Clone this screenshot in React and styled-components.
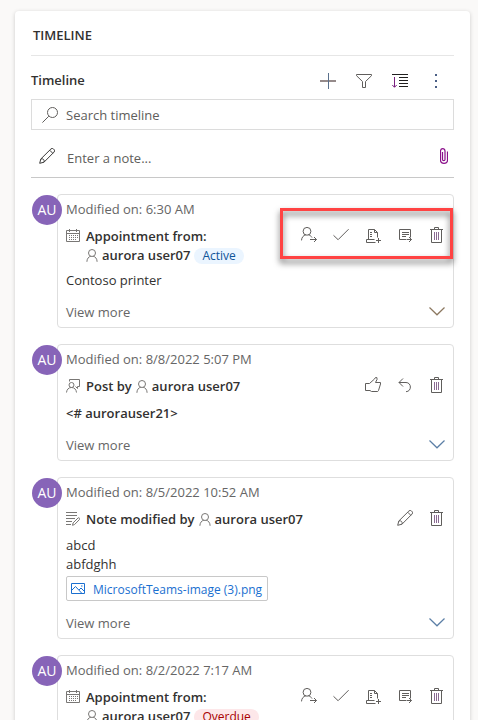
import React from "react";
import styled, { createGlobalStyle, css } from "styled-components";

const GlobalStyle = createGlobalStyle`
  *, *::before, *::after { box-sizing: border-box; }
  body {
    margin: 0;
    background: #faf9f8;
    color: #323130;
    font-family: "Open Sans", "Noto Sans", sans-serif;
    font-size: 13px;
    line-height: 19px;
  }
  button, input { font: inherit; color: inherit; }
  h2, h3, p, ul { margin: 0; padding: 0; font-size: inherit; }
`;

/* ---------- icons ---------- */

const Glyph = styled.svg`
  display: block;
  flex: none;
  fill: none;
  stroke: currentColor;
  stroke-width: 1;
`;

const Icon = ({ w = 16, h = 16, children }) => (
  <Glyph width={w} height={h} viewBox={`0 0 ${w} ${h}`} aria-hidden="true">
    {children}
  </Glyph>
);

const PlusIcon = () => (
  <Icon>
    <path d="M0 8H16" stroke="#958a8a" strokeWidth="2" />
    <path d="M8.5 0V16" stroke="#5a708c" />
  </Icon>
);
const FilterIcon = () => (
  <Icon>
    <path d="M.5 1.5h15v1.2L9.5 8.5v6h-3v-6L.5 2.7z" />
  </Icon>
);
const SortIcon = () => (
  <Icon>
    <path d="M0 1.5h16M7 4.5h9M7 7.5h9M7 10.5h9M7 13.5h9" stroke="#201f1e" />
    <path d="M2.5 4v10M.3 12l2.2 2.3L4.7 12" stroke="#7a2080" />
  </Icon>
);
const MoreIcon = () => (
  <Icon>
    <path d="M7 1h2v2H7zM7 7h2v2H7zM7 13h2v2H7z" fill="#4a5f85" stroke="none" />
  </Icon>
);
const SearchIcon = () => (
  <Icon>
    <circle cx="10.5" cy="5.5" r="5" />
    <path d="M6.8 9.2.4 15.6" />
  </Icon>
);
const PencilIcon = () => (
  <Icon>
    <path d="M.7 15.3l1.1-4.3L11.9 1a1.8 1.8 0 0 1 2.6 0l.5.5a1.8 1.8 0 0 1 0 2.6L5 14.2zM10.7 2.2l3.1 3.1M1.8 11a2.4 2.4 0 0 1 3.2 3.2" />
  </Icon>
);
const ClipIcon = () => (
  <Icon w={8} h={16}>
    <path
      d="M7.5 3.5v8.8c0 4-7 4-7 0V3.2c0-3.4 4.5-3.4 4.5 0v8.3c0 1.6-2.5 1.6-2.5 0V4"
      stroke="#8a0f8a"
      strokeWidth="1.2"
    />
  </Icon>
);
const AssignIcon = () => (
  <Icon>
    <circle cx="6" cy="4.3" r="3.9" />
    <path d="M.5 13.4c.1-2.9 1.9-5.2 4.3-5.5M7.5 8c1.6.3 2.7 1.1 3.5 2.5M9 12.5h6.5M13 10l2.5 2.5L13 15" />
  </Icon>
);
const CheckIcon = () => (
  <Icon>
    <path d="M.5 8.3l4.600 4.400L15.600 2.200" />
  </Icon>
);
const QueueIcon = () => (
  <Icon>
    <path d="M3.5 12.5v-10h6l3 3v5M9.5 2.5v3h3M1.5 12.5h8M1.5 12.5v3h9M5 5.5h2M5 7.5h2M5 9.5h2M13.5 11v5M11 13.5h5" />
  </Icon>
);
const OpenRecordIcon = () => (
  <Icon>
    <path d="M9 12.5H2.5v-10h11v8M5 5.5h7M5 7.5h7M5 9.5h4M9.5 12.5h5M12 10l2.5 2.5L12 15" />
  </Icon>
);
const TrashIcon = () => (
  <Icon>
    <path d="M1 2.5h13M5.5 2.5v-2h4v2M2.5 2.5v13h10v-13" />
    <path d="M5.5 5v8M7.5 5v8M9.5 5v8" stroke="#8a6a92" />
  </Icon>
);
const LikeIcon = () => (
  <Icon>
    <path d="M.5 6.5h4L9.5 2l1-1.5h1.3l.3 1.8-1.6 3.2h5v1.5l-2 6.5-.8 1H6.5l-1.5-1H.5z" />
  </Icon>
);
const ReplyIcon = () => (
  <Icon>
    <path d="M6 1.5l-4 4 4 4M2 5.5h7c5.7 0 6 9 0 9.2" />
  </Icon>
);
const ChevronIcon = () => (
  <Icon>
    <path d="M.5 3.5l7.5 7.3 7.5-7.3" strokeWidth="1.2" />
  </Icon>
);
const PersonIcon = () => (
  <Icon w={12} h={13}>
    <circle cx="6" cy="4" r="3.5" />
    <path d="M.9 12.8c0-3 1.7-5.2 3.9-5.5M11.1 12.8c0-3-1.7-5.2-3.9-5.5" />
  </Icon>
);
const CalendarIcon = () => (
  <Icon w={14} h={14}>
    <path d="M.5 1.5h13v11H.5zM.5 4.5h13M3.5 0v3M10.5 0v3" />
    <path d="M3 6.5h9M3 8.5h9M3 10.5h7" strokeDasharray="1 1" />
  </Icon>
);
const PostIcon = () => (
  <Icon w={14} h={14}>
    <path d="M3.5 2.5v-2h10v7h-2v2l-2-2" />
    <circle cx="5.5" cy="6" r="2.5" />
    <path d="M.5 13.5c.3-3 2-5 5-5s4.7 2 5 5" />
  </Icon>
);
const NoteIcon = () => (
  <Icon w={14} h={14}>
    <path d="M0 .5h11M0 3.5h11M0 6.5h9M0 9.5h6M0 12.5h5" />
    <path d="M6.5 13.3l.6-2.400 4.900-4.900c1-.9 2.300.5 1.500 1.500l-4.900 5z" />
  </Icon>
);
const PictureIcon = () => (
  <Icon w={14} h={12}>
    <path d="M.5.5h13v10H.5zM.5 7.5l4-4 6.5 7M8 7l2-2 3.5 3.5M10 3h1.5" />
  </Icon>
);

/* ---------- layout ---------- */

const Page = styled.main`
  height: 100vh;
  overflow: hidden;
  padding: 11px 8px 0 15px;
`;

const Panel = styled.section`
  min-height: 100vh;
  padding: 0 16px 16px;
  background: #fff;
  border-radius: 4px;
  box-shadow: 0 1px 4px rgba(0, 0, 0, 0.18);
`;

const PanelTitle = styled.h2`
  padding: 15px 2px 10px;
  border-bottom: 1px solid #e6e6e6;
  font-weight: 600;
`;

const Toolbar = styled.div`
  display: flex;
  align-items: center;
  height: 36px;
  margin-top: 7px;
`;

const ToolbarTitle = styled.h3`
  flex: 1;
  padding-bottom: 2px;
  font-weight: 600;
`;

const IconButton = styled.button`
  display: flex;
  align-items: center;
  justify-content: center;
  width: ${(p) => p.$width}px;
  height: 16px;
  padding: 0;
  border: 0;
  background: none;
  color: #605e5c;
  cursor: pointer;
`;

const SearchBox = styled.label`
  display: flex;
  align-items: center;
  gap: 8px;
  height: 31px;
  padding: 0 10px;
  border: 1px solid #dcdcdc;
  color: #605e5c;
`;

const NoteBox = styled.label`
  display: flex;
  gap: 12px;
  padding: 18px 6px 9px 8px;
  border-bottom: 1px solid #c8c8c8;
  color: #3b3a39;
`;

const TextInput = styled.input`
  flex: 1;
  min-width: 0;
  height: 20px;
  padding: 0;
  border: 0;
  outline: 0;
  background: none;
  &::placeholder { color: #605e5c; opacity: 1; }
`;

const Feed = styled.ul`
  display: flex;
  flex-direction: column;
  gap: 16px;
  margin-top: 16px;
  list-style: none;
`;

const Entry = styled.li`
  display: flex;
  align-items: flex-start;
`;

const Avatar = styled.span`
  z-index: 1;
  flex: none;
  width: 30px;
  margin: 1px -5px 0 1px;
  border-radius: 50%;
  background: #8764b8;
  color: #fff;
  font-size: 14px;
  line-height: 30px;
  text-align: center;
`;

const Card = styled.article`
  flex: 1;
  min-width: 0;
  padding: 4px 0 5px 8px;
  border: 1px solid #dedede;
  border-radius: 4px;
`;

const Modified = styled.p`
  color: #666;
  line-height: 20px;
`;

const CardHeader = styled.header`
  display: flex;
  align-items: flex-start;
  gap: 6px;
  min-height: 20px;
  margin: 8px 0 6px;
  color: #605e5c;
`;

const TitleIcon = styled.span`
  padding-top: 2px;
  color: #797775;
`;

const Title = styled.h3`
  display: flex;
  flex: 1;
  flex-direction: ${(p) => (p.$stacked ? "column" : "row")};
  gap: ${(p) => (p.$stacked ? 0 : 4)}px;
  color: #323130;
  font-weight: 600;
  white-space: nowrap;
`;

const Author = styled.span`
  display: flex;
  align-items: center;
  gap: 4px;
  & > svg { color: #797775; }
`;

const tones = {
  info: css`background: #ebf5ff; color: #0f5499;`,
  danger: css`background: #fde7e9; color: #a80000;`,
};

const Badge = styled.span`
  padding: 0 8px;
  border-radius: 8px;
  font-size: 12px;
  font-weight: 400;
  line-height: 16px;
  ${(p) => tones[p.$tone]}
`;

const Actions = styled.div`
  position: relative;
  display: flex;
`;

const Highlight = styled.span`
  position: absolute;
  inset: -19px 0 -16px -13px;
  border: 3px solid #ff4343;
  filter: drop-shadow(0 4px 3px rgba(0, 0, 0, 0.6));
  pointer-events: none;
`;

const Body = styled.p`
  font-weight: ${(p) => (p.$strong ? 600 : 400)};
  line-height: ${(p) => (p.$strong ? 20 : 19)}px;
  white-space: pre-line;
`;

const Attachment = styled.a`
  display: flex;
  align-items: flex-start;
  gap: 8px;
  width: fit-content;
  height: 25px;
  margin-top: 2px;
  padding: 0 5px 0 4px;
  border: 1px solid #c8c8c8;
  border-radius: 2px;
  color: #1a6fd0;
  font-size: 12px;
  line-height: 26px;
  text-decoration: none;
  & > svg { margin-top: 6px; }
`;

const ViewMore = styled.button`
  display: flex;
  align-items: center;
  justify-content: space-between;
  width: 100%;
  height: 20px;
  margin-top: 12px;
  padding: 0 8px 0 0;
  border: 0;
  background: none;
  color: #666;
  cursor: pointer;
  & > svg { color: ${(p) => (p.$warm ? "#8c7860" : "#5c7fa6")}; }
`;

/* ---------- data ---------- */

const actionIcons = {
  Assign: AssignIcon,
  "Close activity": CheckIcon,
  "Add to queue": QueueIcon,
  "Open record": OpenRecordIcon,
  Delete: TrashIcon,
  Like: LikeIcon,
  Reply: ReplyIcon,
  Edit: PencilIcon,
};

const activityActions = ["Assign", "Close activity", "Add to queue", "Open record", "Delete"];

const entries = [
  {
    modified: "6:30 AM",
    Kind: CalendarIcon,
    title: "Appointment from:",
    stacked: true,
    badge: ["Active", "info"],
    actions: activityActions,
    highlighted: true,
    body: "Contoso printer",
  },
  {
    modified: "8/8/2022 5:07 PM",
    Kind: PostIcon,
    title: "Post by",
    actions: ["Like", "Reply", "Delete"],
    body: "<# aurorauser21>",
    strong: true,
  },
  {
    modified: "8/5/2022 10:52 AM",
    Kind: NoteIcon,
    title: "Note modified by",
    actions: ["Edit", "Delete"],
    body: "abcd\nabfdghh",
    attachment: "MicrosoftTeams-image (3).png",
  },
  {
    modified: "8/2/2022 7:17 AM",
    Kind: CalendarIcon,
    title: "Appointment from:",
    stacked: true,
    badge: ["Overdue", "danger"],
    actions: activityActions,
  },
];

const TimelineEntry = ({ entry }) => {
  const { Kind } = entry;
  return (
    <Entry>
      <Avatar>AU</Avatar>
      <Card>
        <Modified>Modified on: {entry.modified}</Modified>
        <CardHeader>
          <TitleIcon><Kind /></TitleIcon>
          <Title $stacked={entry.stacked}>
            <span>{entry.title}</span>
            <Author>
              <PersonIcon />
              <span>aurora user07</span>
              {entry.badge && <Badge $tone={entry.badge[1]}>{entry.badge[0]}</Badge>}
            </Author>
          </Title>
          <Actions>
            {entry.actions.map((name) => {
              const Action = actionIcons[name];
              return (
                <IconButton key={name} type="button" $width={32} aria-label={name}>
                  <Action />
                </IconButton>
              );
            })}
            {entry.highlighted && <Highlight />}
          </Actions>
        </CardHeader>
        {entry.body && <Body $strong={entry.strong}>{entry.body}</Body>}
        {entry.attachment && (
          <Attachment href="#attachment">
            <PictureIcon />
            {entry.attachment}
          </Attachment>
        )}
        <ViewMore type="button" $warm={entry.highlighted}>
          View more
          <ChevronIcon />
        </ViewMore>
      </Card>
    </Entry>
  );
};

export default function App() {
  return (
    <>
      <GlobalStyle />
      <Page>
        <Panel>
          <PanelTitle>TIMELINE</PanelTitle>
          <Toolbar>
            <ToolbarTitle>Timeline</ToolbarTitle>
            <IconButton type="button" $width={36} aria-label="Create a timeline record"><PlusIcon /></IconButton>
            <IconButton type="button" $width={36} aria-label="Filter"><FilterIcon /></IconButton>
            <IconButton type="button" $width={36} aria-label="Sort"><SortIcon /></IconButton>
            <IconButton type="button" $width={36} aria-label="More commands"><MoreIcon /></IconButton>
          </Toolbar>
          <SearchBox>
            <SearchIcon />
            <TextInput type="search" placeholder="Search timeline" aria-label="Search timeline" />
          </SearchBox>
          <NoteBox>
            <PencilIcon />
            <TextInput type="text" placeholder="Enter a note..." aria-label="Enter a note" />
            <IconButton type="button" $width={8} aria-label="Attach a file"><ClipIcon /></IconButton>
          </NoteBox>
          <Feed>
            {entries.map((entry) => (
              <TimelineEntry key={entry.modified} entry={entry} />
            ))}
          </Feed>
        </Panel>
      </Page>
    </>
  );
}
